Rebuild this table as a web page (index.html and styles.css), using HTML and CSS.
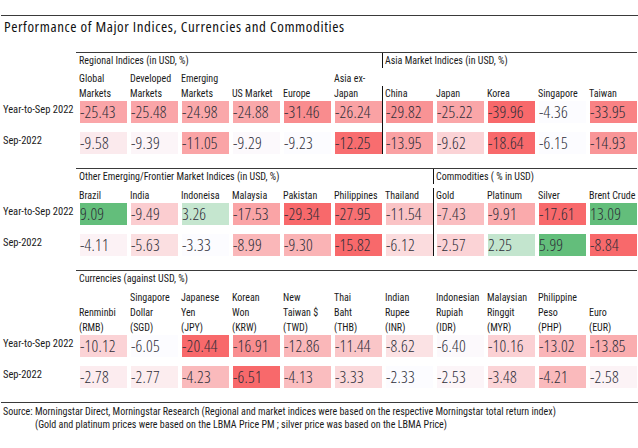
FILE: index.html
```html
<!DOCTYPE html>
<html>
<head>
<meta charset="utf-8">
<link rel="stylesheet" href="styles.css">
</head>
<body>
<div class="report">
  <h1 class="title">Performance of Major Indices, Currencies and Commodities</h1>

  <section class="sec s1">
    <div class="blank"></div>
    <div class="gh g-reg">Regional Indices (in USD, %)</div>
    <div class="gh g-asia sep">Asia Market Indices (in USD, %)</div>

    <div class="blank"></div>
    <div class="ch">Global<br>Markets</div>
    <div class="ch">Developed<br>Markets</div>
    <div class="ch">Emerging<br>Markets</div>
    <div class="ch">US Market</div>
    <div class="ch">Europe</div>
    <div class="ch">Asia ex-<br>Japan</div>
    <div class="ch sep">China</div>
    <div class="ch">Japan</div>
    <div class="ch">Korea</div>
    <div class="ch">Singapore</div>
    <div class="ch">Taiwan</div>

    <div class="lbl r1">Year-to-Sep 2022</div>
    <div class="v r1" style="background-color:#FAA5A8">-25.43</div>
    <div class="v r1" style="background-color:#FAA5A8">-25.48</div>
    <div class="v r1" style="background-color:#FAA8AA">-24.98</div>
    <div class="v r1" style="background-color:#FAA8AA">-24.88</div>
    <div class="v r1" style="background-color:#F98C8E">-31.46</div>
    <div class="v r1" style="background-color:#FAA2A4">-26.24</div>
    <div class="v r1 sep" style="background-color:#F99395">-29.82</div>
    <div class="v r1" style="background-color:#FAA6A8">-25.22</div>
    <div class="v r1" style="background-color:#F8696B">-39.96</div>
    <div class="v r1" style="background-color:#FCFCFF">-4.36</div>
    <div class="v r1" style="background-color:#F98284">-33.95</div>

    <div class="lbl r2">Sep-2022</div>
    <div class="v r2" style="background-color:#FBEAED">-9.58</div>
    <div class="v r2" style="background-color:#FCF5F8">-9.39</div>
    <div class="v r2" style="background-color:#FAA4A6">-11.05</div>
    <div class="v r2" style="background-color:#FCF9FC">-9.29</div>
    <div class="v r2" style="background-color:#FCFCFF">-9.23</div>
    <div class="v r2" style="background-color:#F86D6F">-12.25</div>
    <div class="v r2 sep" style="background-color:#FAA1A3">-13.95</div>
    <div class="v r2" style="background-color:#FBD3D6">-9.62</div>
    <div class="v r2" style="background-color:#F8696B">-18.64</div>
    <div class="v r2" style="background-color:#FCFCFF">-6.15</div>
    <div class="v r2" style="background-color:#F99597">-14.93</div>
  </section>

  <section class="sec s2">
    <div class="blank"></div>
    <div class="gh g-em">Other Emerging/Frontier Market Indices (in USD, %)</div>
    <div class="gh g-com sep">Commodities ( % in USD)</div>

    <div class="blank"></div>
    <div class="ch">Brazil</div>
    <div class="ch">India</div>
    <div class="ch">Indoneisa</div>
    <div class="ch">Malaysia</div>
    <div class="ch">Pakistan</div>
    <div class="ch">Philippines</div>
    <div class="ch">Thailand</div>
    <div class="ch sep">Gold</div>
    <div class="ch">Platinum</div>
    <div class="ch">Silver</div>
    <div class="ch">Brent Crude</div>

    <div class="lbl r1">Year-to-Sep 2022</div>
    <div class="v r1" style="background-color:#63BE7B">9.09</div>
    <div class="v r1" style="background-color:#FBCDD0">-9.49</div>
    <div class="v r1" style="background-color:#C5E6CF">3.26</div>
    <div class="v r1" style="background-color:#FAA4A6">-17.53</div>
    <div class="v r1" style="background-color:#F8696B">-29.34</div>
    <div class="v r1" style="background-color:#F87072">-27.95</div>
    <div class="v r1" style="background-color:#FAC3C5">-11.54</div>
    <div class="v r1 sep" style="background-color:#FABEC1">-7.43</div>
    <div class="v r1" style="background-color:#FAAAAC">-9.91</div>
    <div class="v r1" style="background-color:#F8696B">-17.61</div>
    <div class="v r1" style="background-color:#63BE7B">13.09</div>

    <div class="lbl r2">Sep-2022</div>
    <div class="v r2" style="background-color:#FCF2F5">-4.11</div>
    <div class="v r2" style="background-color:#FBDFE1">-5.63</div>
    <div class="v r2" style="background-color:#FCFCFF">-3.33</div>
    <div class="v r2" style="background-color:#FAB7B9">-8.99</div>
    <div class="v r2" style="background-color:#FAB3B5">-9.30</div>
    <div class="v r2" style="background-color:#F8696B">-15.82</div>
    <div class="v r2" style="background-color:#FBDCDE">-6.12</div>
    <div class="v r2 sep" style="background-color:#FBD3D6">-2.57</div>
    <div class="v r2" style="background-color:#C3E5CE">2.25</div>
    <div class="v r2" style="background-color:#63BE7B">5.99</div>
    <div class="v r2" style="background-color:#F8696B">-8.84</div>
  </section>

  <section class="sec s3">
    <div class="blank"></div>
    <div class="gh g-cur">Currencies (against USD, %)</div>

    <div class="blank"></div>
    <div class="ch">Renminbi<br>(RMB)</div>
    <div class="ch">Singapore<br>Dollar<br>(SGD)</div>
    <div class="ch">Japanese<br>Yen<br>(JPY)</div>
    <div class="ch">Korean<br>Won<br>(KRW)</div>
    <div class="ch">New<br>Taiwan $<br>(TWD)</div>
    <div class="ch">Thai<br>Baht<br>(THB)</div>
    <div class="ch">Indian<br>Rupee<br>(INR)</div>
    <div class="ch">Indonesian<br>Rupiah<br>(IDR)</div>
    <div class="ch">Malaysian<br>Ringgit<br>(MYR)</div>
    <div class="ch">Philippine<br>Peso<br>(PHP)</div>
    <div class="ch">Euro<br>(EUR)</div>

    <div class="lbl r1">Year-to-Sep 2022</div>
    <div class="v r1" style="background-color:#FBD3D6">-10.12</div>
    <div class="v r1" style="background-color:#FCFCFF">-6.05</div>
    <div class="v r1" style="background-color:#F8696B">-20.44</div>
    <div class="v r1" style="background-color:#F98E90">-16.91</div>
    <div class="v r1" style="background-color:#FAB7B9">-12.86</div>
    <div class="v r1" style="background-color:#FAC6C8">-11.44</div>
    <div class="v r1" style="background-color:#FBE2E4">-8.62</div>
    <div class="v r1" style="background-color:#FCF9FC">-6.40</div>
    <div class="v r1" style="background-color:#FBD1D4">-10.16</div>
    <div class="v r1" style="background-color:#FAB5B8">-13.02</div>
    <div class="v r1" style="background-color:#FAADAF">-13.85</div>

    <div class="lbl r2">Sep-2022</div>
    <div class="v r2" style="background-color:#FCECEF">-2.78</div>
    <div class="v r2" style="background-color:#FCEDEF">-2.77</div>
    <div class="v r2" style="background-color:#FABABC">-4.23</div>
    <div class="v r2" style="background-color:#F8696B">-6.51</div>
    <div class="v r2" style="background-color:#FABDBF">-4.13</div>
    <div class="v r2" style="background-color:#FBD9DB">-3.33</div>
    <div class="v r2" style="background-color:#FCFCFF">-2.33</div>
    <div class="v r2" style="background-color:#FCF5F8">-2.53</div>
    <div class="v r2" style="background-color:#FBD4D7">-3.48</div>
    <div class="v r2" style="background-color:#FABABC">-4.21</div>
    <div class="v r2" style="background-color:#FCF3F6">-2.58</div>
  </section>

  <footer class="foot">
    <p>Source: Morningstar Direct, Morningstar Research (Regional and market indices were based on the respective Morningstar total return index)</p>
    <p class="indent">(Gold and platinum prices were based on the LBMA Price PM ; silver price was based on the LBMA Price)</p>
  </footer>
</div>
</body>
</html>
```

FILE: styles.css
```css
* { box-sizing: border-box; }

html, body {
  margin: 0;
  padding: 0;
  background: #ffffff;
}

body {
  font-family: "Roboto", "Liberation Sans", sans-serif;
  font-stretch: 75%;
  color: #1a1a1a;
  width: 638px;
  height: 448px;
  overflow: hidden;
}

.report {
  padding-top: 15px;
  margin-left: 1px;
}

.title {
  margin: 0;
  height: 37px;
  border-top: 1px solid #3a3a3a;
  padding: 1px 0 0 3px;
  font-family: "Open Sans", "Roboto", sans-serif;
  font-size: 15px;
  line-height: 19px;
  font-weight: 380;
  font-stretch: 75%;
  letter-spacing: 0.6px;
  color: #111111;
  white-space: nowrap;
}

.sec {
  display: grid;
  grid-template-columns: 75px repeat(10, 51px) 51px;
  margin-bottom: 14px;
}

.s1 { grid-template-rows: 16px 33px 31px 22px; }
.s2 { grid-template-rows: 16px 19px 31px 22px; }
.s3 { grid-template-rows: 16px 49px 31px 22px; }

.gh {
  border-top: 1px solid #3a3a3a;
  font-size: 10px;
  line-height: 15px;
  padding-left: 3px;
  white-space: nowrap;
}

.g-reg { grid-column: 2 / span 6; }
.g-asia { grid-column: 8 / span 5; }
.g-em { grid-column: 2 / span 7; }
.g-com { grid-column: 9 / span 4; }
.g-cur { grid-column: 2 / span 11; }

.ch {
  align-self: end;
  font-size: 10px;
  line-height: 15px;
  padding-left: 3px;
  white-space: nowrap;
}

.sep {
  box-shadow: inset 1px 0 0 #111111;
}

.lbl {
  font-size: 10.5px;
  line-height: 18px;
  padding-left: 2px;
  white-space: nowrap;
}

.v {
  font-family: "Open Sans", "Roboto", sans-serif;
  font-stretch: 75%;
  font-weight: 350;
  font-size: 16.5px;
  letter-spacing: 0.2px;
  line-height: 22px;
  padding-left: 4px;
  color: #2e2e38;
  white-space: nowrap;
  background-clip: content-box;
}

.v.r1 {
  padding-bottom: 9px;
}

.foot {
  border-top: 1px solid #3a3a3a;
  padding: 2px 0 0 2px;
  font-size: 10px;
  line-height: 13px;
  color: #1a1a1a;
}

.foot p {
  margin: 0;
  white-space: nowrap;
}

.foot .indent {
  padding-left: 32px;
}
```
